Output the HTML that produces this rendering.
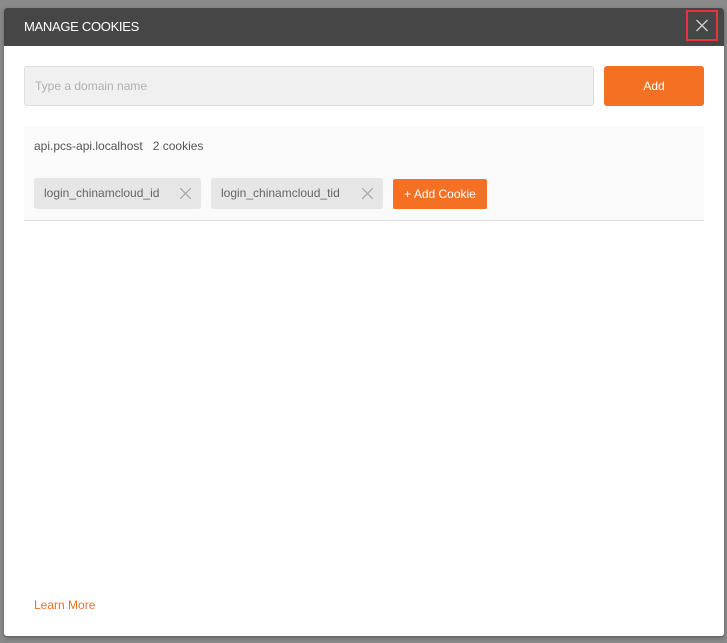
<!DOCTYPE html>
<html><head><style>
body{margin:0;width:727px;height:643px;background:#8a8a8a;font-family:"Liberation Sans",sans-serif;position:relative;overflow:hidden}
.d{position:absolute;left:4px;top:8px;width:720px;height:628px;background:#fff;border-radius:3px;box-shadow:0 2px 4px rgba(0,0,0,.3);overflow:hidden}
.h{position:absolute;left:0;top:0;width:720px;height:38px;background:#464646;color:#fff;font-size:13px;line-height:38px}
.h span{position:absolute;left:20px;letter-spacing:-.3px}
.x{position:absolute;left:682px;top:2px;width:28px;height:27px;border:2px solid #e8333a}
.in{position:absolute;left:20px;top:58px;background:#f0f0f0;border:1px solid #ddd;border-radius:3px;color:#b0b0b0;font-size:12px;line-height:38px;padding-left:10px;box-sizing:border-box;width:570px;height:40px}
.add{position:absolute;left:600px;top:58px;width:100px;height:40px;background:#f47023;border-radius:3px;color:#fff;font-size:12px;line-height:40px;text-align:center}
.p{position:absolute;left:20px;top:118px;width:680px;height:94px;background:#fafafa;border-bottom:1px solid #ddd}
.t{position:absolute;left:10px;top:13px;font-size:12px;color:#555}
.c{position:absolute;top:52px;height:31px;background:#e6e6e6;border-radius:3px;font-size:12px;color:#666;line-height:31px;padding-left:10px;box-sizing:border-box}
.c svg{position:absolute;right:10px;top:10px}
.ac{position:absolute;left:369px;top:53px;width:94px;height:30px;background:#f47023;border-radius:2px;color:#fff;font-size:12px;line-height:30px;text-align:center}
.lm{position:absolute;left:30px;top:590px;font-size:12px;color:#f47023}
</style></head><body>
<div class="d">
<div class="h"><span>MANAGE COOKIES</span><div class="x"><svg width="28" height="27"><path d="M8.5 8L19.5 19M19.5 8L8.5 19" stroke="#ccc" stroke-width="1.4"/></svg></div></div>
<div class="in">Type a domain name</div>
<div class="add">Add</div>
<div class="p">
<div class="t">api.pcs-api.localhost &nbsp;&nbsp;2 cookies</div>
<div class="c" style="left:10px;width:167px">login_chinamcloud_id<svg width="11" height="11"><path d="M0 0L11 11M11 0L0 11" stroke="#aaa" stroke-width="1.3"/></svg></div>
<div class="c" style="left:187px;width:172px">login_chinamcloud_tid<svg width="11" height="11"><path d="M0 0L11 11M11 0L0 11" stroke="#aaa" stroke-width="1.3"/></svg></div>
<div class="ac">+ Add Cookie</div>
</div>
<div class="lm">Learn More</div>
</div>
</body></html>
